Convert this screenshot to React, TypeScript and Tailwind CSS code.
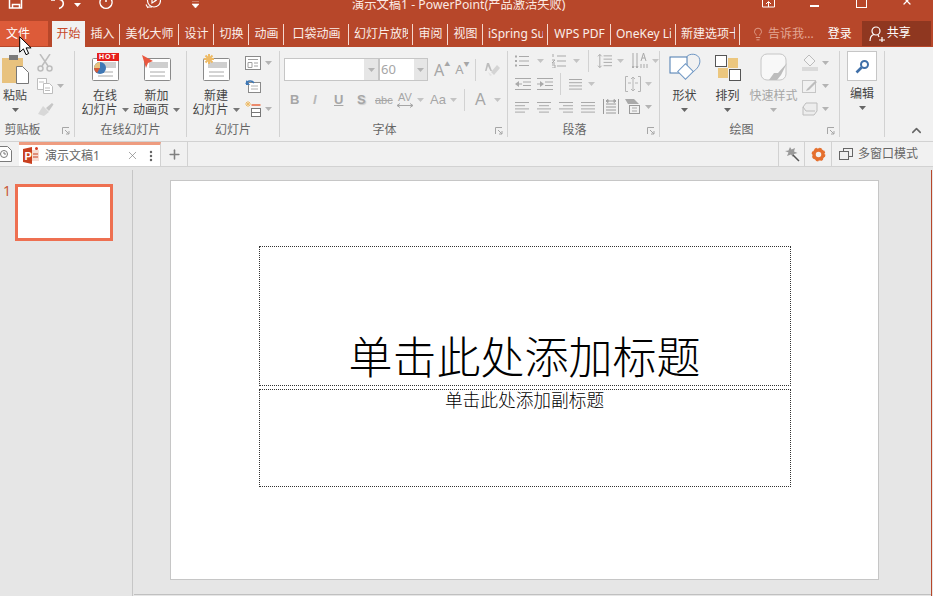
import type { ReactNode } from "react";
import { X, Plus, MoreVertical, Lightbulb, ChevronUp } from "lucide-react";

const tabs = [
  { label: "插入", w: "w-[35px]" },
  { label: "美化大师", w: "w-[59px]" },
  { label: "设计", w: "w-[35px]" },
  { label: "切换", w: "w-[35px]" },
  { label: "动画", w: "w-[35px]" },
  { label: "口袋动画", w: "w-[65px]" },
  { label: "幻灯片放映", w: "w-[64px]" },
  { label: "审阅", w: "w-[35px]" },
  { label: "视图", w: "w-[35px]" },
  { label: "iSpring Suite", w: "w-[65px]" },
  { label: "WPS PDF", w: "w-[63px]" },
  { label: "OneKey Lite", w: "w-[65px]" },
  { label: "新建选项卡", w: "w-[64px]" },
];

function Caret({ className = "text-[#b4b4b4]" }: { className?: string }) {
  return (
    <svg width="7" height="4" viewBox="0 0 7 4" className={`shrink-0 ${className}`}>
      <path d="M0 0h7L3.5 4z" fill="currentColor" />
    </svg>
  );
}

function Launcher() {
  return (
    <svg width="8" height="8" viewBox="0 0 8 8" className="absolute right-[4px] bottom-[2px]" fill="none" stroke="#a6a6a6">
      <path d="M.5 7V.5H7M3 3l4 4M7 4v3H4" />
    </svg>
  );
}

function Group({ label, w, labelClass = "", children }: { label?: string; w: string; labelClass?: string; children: ReactNode }) {
  return (
    <div className={`relative flex h-[86px] shrink-0 flex-col border-r border-[#d2d2d2] ${w}`}>
      <div className="flex h-[70px] min-h-0">{children}</div>
      {label && <div className={`mt-[3px] text-center text-[12px] leading-[14px] text-[#666] ${labelClass}`}>{label}</div>}
    </div>
  );
}

function BigButton({ w, icon, lines, caret, muted }: { w: string; icon: ReactNode; lines: ReactNode; caret?: boolean; muted?: boolean }) {
  return (
    <div className={`flex shrink-0 flex-col items-center ${w} ${muted ? "text-[#a6a6a6]" : "text-[#444]"}`}>
      <div className="flex h-[33px] items-center justify-center">{icon}</div>
      <div className="mt-[5px] text-center text-[12px] leading-[14px] whitespace-nowrap">{lines}</div>
      {caret && <Caret className={muted ? "mt-[5px] text-[#b4b4b4]" : "mt-[5px] text-[#666]"} />}
    </div>
  );
}

function SmallIcon({ children, caret = true }: { children: ReactNode; caret?: boolean }) {
  return (
    <div className="flex h-[23px] items-center gap-[4px]">
      {children}
      {caret && <Caret />}
    </div>
  );
}

function Lines({ rows, w = 14 }: { rows: [number, number][]; w?: number }) {
  return (
    <svg width={w} height="12" viewBox={`0 0 ${w} 12`} stroke="#a9a9a9" fill="none">
      {rows.map(([a, b], i) => (
        <path key={i} d={`M${a} ${1.5 + i * 3.2}H${b}`} />
      ))}
    </svg>
  );
}

function SlideIcon({ children }: { children?: ReactNode }) {
  return (
    <svg width="30" height="28" viewBox="0 0 30 28" fill="none">
      <rect x="2.5" y="4.5" width="26" height="22" rx="1" fill="#fff" stroke="#8a8a8a" />
      <rect x="7" y="8" width="19" height="6" fill="#cfcfcf" />
      <path d="M8 18h15M8 22h15" stroke="#a8a8a8" />
      {children}
    </svg>
  );
}

function TwoLines({ top, bottom }: { top: string; bottom: string }) {
  return (
    <>
      <div className="h-[14px]">{top}</div>
      <div className="flex h-[14px] items-center justify-center gap-[4px]">
        {bottom}
        <Caret className="text-[#777]" />
      </div>
    </>
  );
}

export default function App() {
  return (
    <div
      className="relative flex h-[596px] w-[933px] flex-col overflow-hidden bg-[#e6e6e6] text-[12px]"
      style={{ fontFamily: '"Noto Sans", "Noto Sans CJK SC", sans-serif' }}
    >
      {/* title bar, icons are cut off by the top of the shot */}
      <div className="relative flex h-[21px] shrink-0 items-start overflow-hidden bg-[#b7472a] text-white">
        <div className="flex h-[10px] items-end">
          <svg width="16" height="10" viewBox="0 0 16 10" className="ml-[8px]" fill="none" stroke="#fff" strokeWidth="1.5">
            <path d="M1.5-4v12h12V-4M4.500 8V4.500h7V8" />
          </svg>
          <svg width="18" height="10" viewBox="0 0 18 10" className="ml-[26px]" fill="none" stroke="#fff" strokeWidth="1.6">
            <path d="M3 0c3-2 9-1 10 2s-1 6-4 6.500M1 0h4M3 0l2-3" />
          </svg>
          <svg width="7" height="4" viewBox="0 0 7 4" className="mb-[3px] ml-[6px]"><path d="M0 0h7L3.500 4z" fill="#fff" /></svg>
          <svg width="14" height="10" viewBox="0 0 14 10" className="ml-[18px]" fill="none" stroke="#fff" strokeWidth="1.500">
            <path d="M2-1a6 6 0 1 0 10 0M7-3v5" />
          </svg>
          <svg width="16" height="11" viewBox="0 0 16 11" className="ml-[32px]" fill="none" stroke="#fff" strokeWidth="1.200">
            <circle cx="9" cy="1.500" r="6.500" />
            <path d="M7-1l4 2.500L7 4zM1 5.500L3 9M3 8h4" />
          </svg>
          <svg width="7" height="8" viewBox="0 0 7 8" className="mb-[1px] ml-[31px]">
            <path d="M0 0h7M0 3h7L3.500 7z" fill="#fff" stroke="#fff" strokeWidth=".6" />
          </svg>
        </div>
        <div className="absolute left-[352px] top-[-4px] text-[12.250px] leading-[18px] whitespace-nowrap text-[#fbe9e3]">
          演示文稿1 - PowerPoint(产品激活失败)
        </div>
        <div className="ml-auto flex h-[8px] items-end pr-[20px]">
          <svg width="13" height="8" viewBox="0 0 13 8" className="mr-[35px]" fill="none" stroke="#fff">
            <path d="M.5-1v8h12v-8M6.500 7V2M4 4l2.500-2.500L9 4" />
          </svg>
          <div className="mb-[1px] mr-[37px] h-[2px] w-[9px] bg-white" />
          <div className="mr-[34px] h-[8px] w-[11px] border-x border-b border-white" />
          <X size={12} strokeWidth={2.5} className="-translate-y-[1px]" color="#fff" />
        </div>
      </div>

      {/* ribbon tabs */}
      <div className="flex h-[26px] shrink-0 items-stretch bg-[#b7472a] text-[12px] text-[#fbeee9]">
        <div className="flex h-[25px] w-[48px] items-center bg-[#dd5b39] pl-[6px] text-white">文件</div>
        <div className="ml-[4px] flex w-[33px] items-center justify-center bg-[#f1f1f1] text-[#c6492a]">开始</div>
        {tabs.map((t) => (
          <div key={t.label} className={`flex items-center ${t.w}`}>
            <span className="mr-[4px] ml-[5px] min-w-0 flex-1 overflow-hidden text-center whitespace-nowrap">{t.label}</span>
            <span className="h-[21px] w-px shrink-0 bg-[#f5d8cf]" />
          </div>
        ))}
        <div className="ml-[11px] flex items-center gap-[2px] text-[#e3a693]">
          <Lightbulb size={14} strokeWidth={1.5} />
          <span className="ml-[1px]">告诉我...</span>
        </div>
        <div className="ml-[14px] flex items-center text-white">登录</div>
        <div className="ml-[10px] flex h-[25px] w-[69px] items-center gap-[2px] bg-[#8f3720] pl-[7px] text-white">
          <svg width="16" height="16" viewBox="0 0 16 16" fill="none" stroke="#fff" strokeWidth="1.200">
            <circle cx="7" cy="5" r="4" />
            <path d="M1 15c0-4 2-6 4-6.500M9 9l1 2M10 14h6M13 11v6" />
          </svg>
          <span className="-mt-[2px]">共享</span>
        </div>
      </div>

      {/* ribbon */}
      <div className="flex h-[94px] shrink-0 bg-[#f1f1f1] pt-[4px]">
        <Group label="剪贴板" w="w-[75px]" labelClass="pr-[29px]">
          <BigButton
            w="w-[30px]"
            caret
            icon={
              <svg width="30" height="32" viewBox="0 0 30 32" className="mt-[2px]">
                <rect x="2" y="5" width="21" height="25" fill="#e8c27e" />
                <rect x="9" y="2" width="9" height="5" fill="#7a7a7a" />
                <path d="M16.500 13.500h6l6 6v11h-12z" fill="#fff" stroke="#777" />
              </svg>
            }
            lines="粘贴"
          />
          <div className="ml-[7px] flex flex-col pt-[1px]">
            <SmallIcon caret={false}>
              <svg width="16" height="18" viewBox="0 0 16 18" fill="none" stroke="#bdbdbd" strokeWidth="1.500">
                <path d="M3 0l8 12M13 0L5 12" />
                <circle cx="3.500" cy="14.500" r="2.500" />
                <circle cx="12.500" cy="14.500" r="2.500" />
              </svg>
            </SmallIcon>
            <SmallIcon>
              <svg width="16" height="16" viewBox="0 0 16 16" fill="#fff" stroke="#bdbdbd">
                <path d="M.5.500h9v11h-9z" />
                <path d="M6.500 5.500h6l3 3v7h-9z" />
                <path d="M2 4h5M8 10h5M8 12.500h5" />
              </svg>
            </SmallIcon>
            <SmallIcon caret={false}>
              <svg width="17" height="15" viewBox="0 0 17 15" className="mt-[1px]">
                <path d="M9 6l6-5 1.500 1.500L12 9z" fill="#c6c6c6" />
                <path d="M1 12l5-8 6 6-5 4z" fill="#d8d8d8" />
              </svg>
            </SmallIcon>
          </div>
          <Launcher />
        </Group>

        <Group label="在线幻灯片" w="w-[112px]">
          <BigButton
            w="ml-[2px] w-[56px]"
            icon={
              <div className="relative">
                <SlideIcon>
                  <circle cx="10" cy="14" r="6" fill="#3f78b5" />
                  <path d="M10 14V8a6 6 0 0 0-6 6z" fill="#e8c27e" />
                  <path d="M10 14H4a6 6 0 0 0 3 5z" fill="#d75b36" />
                </SlideIcon>
                <span className="absolute top-[-1px] left-[7px] bg-[#e6201c] px-[2px] text-[7px] leading-[8px] font-bold tracking-[1px] text-white" style={{ fontFamily: '"Liberation Sans", sans-serif' }}>
                  HOT
                </span>
              </div>
            }
            lines={<TwoLines top="在线" bottom="幻灯片" />}
          />
          <BigButton
            w="w-[47px]"
            icon={
              <SlideIcon>
                <path d="M0 1l11 6-5 2-2 5z" fill="#e9573f" />
              </SlideIcon>
            }
            lines={<TwoLines top="新加" bottom="动画页" />}
          />
        </Group>

        <Group label="幻灯片" w="w-[93px]">
          <BigButton
            w="w-[58px]"
            icon={
              <SlideIcon>
                <path d="M8 0v10M3 5h10M4.500 1.500l7 7M11.500 1.500l-7 7" stroke="#eebb66" strokeWidth="2" />
              </SlideIcon>
            }
            lines={<TwoLines top="新建" bottom="幻灯片" />}
          />
          <div className="flex flex-col">
            <SmallIcon>
              <svg width="16" height="14" viewBox="0 0 16 14" fill="#fff" stroke="#8a8a8a">
                <rect x=".5" y=".5" width="15" height="13" />
                <path d="M3 3.500h10M3 6.500h4v5H3zM9 7h4M9 10h4" stroke="#a0a0a0" />
              </svg>
            </SmallIcon>
            <SmallIcon caret={false}>
              <svg width="16" height="14" viewBox="0 0 16 14" fill="none">
                <rect x="3.500" y="3.500" width="12" height="10" fill="#fff" stroke="#8a8a8a" />
                <path d="M1 5a4.500 4.500 0 0 1 8-1" stroke="#3f78b5" strokeWidth="1.500" />
                <path d="M1 1v5h4" fill="#3f78b5" />
                <path d="M6 7h7M6 10h7" stroke="#b0b0b0" />
              </svg>
            </SmallIcon>
            <SmallIcon>
              <svg width="16" height="16" viewBox="0 0 16 16" fill="none">
                <path d="M3 0v6M0 3h6M1 1l4 4M5 1L1 5" stroke="#eebb66" />
                <path d="M6.500 4h9" stroke="#e9673f" strokeWidth="1.500" />
                <rect x="6.500" y="7.500" width="9" height="8" fill="#fff" stroke="#777" />
                <path d="M6.500 11.500h9" stroke="#777" />
              </svg>
            </SmallIcon>
          </div>
        </Group>

        <Group label="字体" w="w-[228px]" labelClass="pr-[18px]">
          <div className="flex flex-col pt-[7px] pl-[4px]">
            <div className="flex items-center">
              <div className="flex h-[23px] w-[95px] border border-[#c6c6c6] bg-white">
                <div className="flex-1" />
                <div className="flex w-[14px] items-center justify-center bg-[#e6e6e6]"><Caret /></div>
              </div>
              <div className="flex h-[23px] w-[49px] border border-[#c6c6c6] bg-white">
                <div className="flex-1 pl-[1px] text-[13px] leading-[21px] text-[#a6a6a6]">60</div>
                <div className="flex w-[13px] items-center justify-center bg-[#e6e6e6]"><Caret /></div>
              </div>
              <span className="ml-[6px] text-[16px] leading-none text-[#a6a6a6]">A</span>
              <span className="mb-[10px] text-[6px] text-[#a6a6a6]">▲</span>
              <span className="ml-[5px] text-[13px] leading-none text-[#a6a6a6]">A</span>
              <span className="mb-[10px] text-[6px] text-[#a6a6a6]">▼</span>
              <span className="ml-[5px] h-[22px] w-px bg-[#d2d2d2]" />
              <svg width="16" height="16" viewBox="0 0 16 16" className="ml-[8px]">
                <path d="M7 10l6-7 3 3-6 7z" fill="#d4d4d4" />
                <path d="M3 1h2l3 8H6.500L4 4 2.500 9H1z" fill="#bdbdbd" />
                <path d="M4 10l4 3-2 1z" fill="#e2e2e2" />
              </svg>
            </div>
            <div className="mt-[8px] flex h-[22px] items-center text-[#a6a6a6]" style={{ fontFamily: '"Liberation Sans", sans-serif' }}>
              <span className="ml-[6px] w-[23px] text-[13px] font-bold">B</span>
              <span className="w-[21px] text-[13px] font-bold text-[#b8b8b8] italic">I</span>
              <span className="w-[23px] text-[13px] font-bold underline">U</span>
              <span className="w-[18px] text-[13px] font-bold" style={{ textShadow: "1px 1px 1px #ccc" }}>S</span>
              <span className="w-[21px] text-[11px] line-through">abc</span>
              <span className="flex w-[18px] flex-col items-center text-[11px] leading-[11px]">
                AV
                <svg width="16" height="5" viewBox="0 0 16 5" fill="none" stroke="#a6a6a6"><path d="M0 2.500h16M3 .500l-3 2 3 2M13 .500l3 2-3 2" /></svg>
              </span>
              <Caret className="ml-[3px] text-[#c4c4c4]" />
              <span className="ml-[6px] w-[15px] text-[13px]">Aa</span>
              <Caret className="ml-[5px] text-[#c4c4c4]" />
              <span className="ml-[7px] h-[22px] w-px bg-[#d2d2d2]" />
              <span className="ml-[10px] w-[11px] text-[16px]">A</span>
              <Caret className="ml-[8px] text-[#c4c4c4]" />
            </div>
          </div>
          <Launcher />
        </Group>

        <Group label="段落" w="w-[152px]" labelClass="pr-[18px]">
          <div className="-mt-[2px] flex flex-col pl-[7px]">
            <div className="flex h-[23px] items-center">
              <svg width="14" height="12" viewBox="0 0 14 12" fill="none" stroke="#a9a9a9"><path d="M4 1.500h10M4 6h10M4 10.500h10" /><path d="M0 1.500h2M0 6h2M0 10.500h2" strokeWidth="2" /></svg>
              <Caret className="ml-[8px] text-[#c4c4c4]" />
              <svg width="14" height="14" viewBox="0 0 14 14" className="ml-[8px]" fill="none" stroke="#a9a9a9"><path d="M5 2h9M5 7h9M5 12h9M1 0v3M0 6h3L0 9h3M0 11h3v3H0" /></svg>
              <Caret className="ml-[7px] text-[#c4c4c4]" />
              <span className="ml-[8px] h-[22px] w-px bg-[#d2d2d2]" />
              <svg width="15" height="16" viewBox="0 0 16 16" className="ml-[8px]" fill="none" stroke="#a9a9a9"><path d="M7 2.500h9M7 6h9M7 9.500h9M7 13h9M3 1v14M1 3l2-2 2 2M1 13l2 2 2-2" /></svg>
              <Caret className="ml-[5px] text-[#c4c4c4]" />
              <svg width="16" height="18" viewBox="0 0 16 18" className="ml-[8px]" fill="none" stroke="#a9a9a9"><path d="M1 1v15M5 1v15M0 14l1 2 1-2M4 14l1 2 1-2M9 9l2.500-8L14 9M10 6h3M9 12v4M12 12v4M15 12v4" /></svg>
              <Caret className="ml-[4px] text-[#c4c4c4]" />
            </div>
            <div className="flex h-[23px] items-center">
              <svg width="16" height="12" viewBox="0 0 16 12" fill="none" stroke="#a9a9a9"><path d="M0 .500h16M8 4h8M8 7.500h8M0 11.500h16" /><path d="M0 6l4-3v6z" fill="#a9a9a9" stroke="none" /><path d="M3 6h4" /></svg>
              <svg width="16" height="12" viewBox="0 0 16 12" className="ml-[6px]" fill="none" stroke="#a9a9a9"><path d="M0 .500h16M8 4h8M8 7.500h8M0 11.500h16" /><path d="M7 6L3 3v6z" fill="#a9a9a9" stroke="none" /><path d="M0 6h4" /></svg>
              <span className="ml-[7px] h-[22px] w-px bg-[#d2d2d2]" />
              <span className="ml-[8px]"><Lines w={13} rows={[[0, 13], [0, 13], [0, 13], [0, 13]]} /></span>
              <Caret className="ml-[6px] text-[#c4c4c4]" />
              <svg width="16" height="16" viewBox="0 0 16 16" className="ml-[30px]" fill="none" stroke="#b5b5b5"><path d="M3 .500H.500v15H3M13 .500h2.500v15H13M8 1v14M6 3l2-2 2 2M6 13l2 2 2-2M3 7h3M10 7h3" /></svg>
              <Caret className="ml-[4px] text-[#c4c4c4]" />
            </div>
            <div className="flex h-[23px] items-center gap-[8px]">
              <Lines rows={[[0, 14], [0, 10], [0, 14], [0, 10]]} />
              <Lines rows={[[0, 14], [2, 12], [0, 14], [2, 12]]} />
              <Lines rows={[[0, 14], [4, 14], [0, 14], [4, 14]]} />
              <Lines rows={[[0, 14], [0, 14], [0, 14], [0, 14]]} />
              <svg width="16" height="15" viewBox="0 0 16 15" fill="none" stroke="#9a9a9a"><path d="M.500 0v15M15.500 0v15M3 5h10M3 8h10M3 11h10M3 14h10M4 2h8M3 2l2-1.500v3zM13 2l-2-1.500v3z" /></svg>
              <span className="-ml-[2px] flex items-center gap-[5px]">
                <svg width="15" height="15" viewBox="0 0 15 15" fill="none"><path d="M0 0h9l5 5H3z" fill="#a9a9a9" /><rect x="4.500" y="6.500" width="10" height="8" fill="#f1f1f1" stroke="#9a9a9a" /><path d="M7 9h5M7 12h5" stroke="#a9a9a9" /></svg>
                <Caret />
              </span>
            </div>
          </div>
          <Launcher />
        </Group>

        <Group label="绘图" w="w-[180px]" labelClass="pr-[16px]">
          <BigButton
            w="w-[49px]"
            caret
            icon={
              <svg width="32" height="32" viewBox="0 0 32 32" fill="none" stroke="#4a7ab0">
                <path d="M17 6.500c1-5 10-6 13-1 3 6-2 12-7 15" stroke="#6f97c4" />
                <rect x="1" y="5" width="17" height="16" fill="#fff" />
                <rect x="11" y="14" width="11" height="11" transform="rotate(45 16.500 19.500)" fill="#fff" stroke="#6f97c4" />
              </svg>
            }
            lines="形状"
          />
          <BigButton
            w="w-[37px]"
            caret
            icon={
              <svg width="28" height="28" viewBox="0 0 28 28">
                <rect x="1.500" y="1.500" width="11" height="11" fill="#fff" stroke="#555" />
                <rect x="14" y="4" width="10" height="10" fill="#ecc77f" />
                <rect x="4" y="14" width="10" height="10" fill="#ecc77f" />
                <rect x="15.500" y="15.500" width="11" height="11" fill="#fff" stroke="#555" />
              </svg>
            }
            lines="排列"
          />
          <BigButton
            w="w-[55px]"
            caret
            muted
            icon={
              <svg width="28" height="30" viewBox="0 0 28 30" fill="none">
                <rect x="1" y="1" width="25" height="26" rx="6" fill="#f8f8f8" stroke="#c6c6c6" />
                <path d="M27 10l-9 10-4 0-5 7h8l4-5z" fill="#bdbdbd" />
              </svg>
            }
            lines="快速样式"
          />
          <div className="ml-[1px] flex flex-col">
            <SmallIcon>
              <svg width="16" height="17" viewBox="0 0 16 17">
                <path d="M7 1l6 6-5 5-6-6z" fill="#f4f4f4" stroke="#bcbcbc" />
                <rect y="13" width="16" height="4" fill="#dadada" />
              </svg>
            </SmallIcon>
            <SmallIcon>
              <svg width="16" height="14" viewBox="0 0 16 14" fill="none">
                <rect x=".500" y="1.500" width="13" height="12" stroke="#c6c6c6" />
                <path d="M5 10l8-8 2 1-8 8-3 1z" fill="#bdbdbd" />
              </svg>
            </SmallIcon>
            <SmallIcon>
              <svg width="16" height="14" viewBox="0 0 16 14">
                <path d="M4 1h11v8l-3 4H1V5z" fill="#ededed" stroke="#bdbdbd" />
                <path d="M1 5l3 4h9" fill="none" stroke="#bdbdbd" />
              </svg>
            </SmallIcon>
          </div>
          <Launcher />
        </Group>

        <Group w="w-[45px]">
          <div className="flex w-full flex-col items-center text-[#444]">
            <div className="flex h-[30px] w-[30px] items-center justify-center border border-[#c6c6c6] bg-white">
              <svg width="15" height="15" viewBox="0 0 15 15" fill="none" stroke="#3f6fa8">
                <circle cx="9.500" cy="5.500" r="3.500" strokeWidth="2" />
                <path d="M6.500 8.500L1.500 13.500" strokeWidth="2.600" />
              </svg>
            </div>
            <div className="mt-[6px] leading-[14px]">编辑</div>
            <Caret className="mt-[5px] text-[#666]" />
          </div>
        </Group>

        <div className="relative flex-1">
          <ChevronUp size={15} strokeWidth={2.500} color="#666" className="absolute right-[9px] bottom-[3px]" />
        </div>
      </div>

      {/* document tab bar */}
      <div className="flex h-[26px] shrink-0 items-stretch border-y border-[#d2d2d2] bg-[#f1f1f1] text-[#666]">
        <div className="flex w-[19px] items-center overflow-hidden">
          <svg width="14" height="16" viewBox="0 0 14 16" className="-ml-[2px]" fill="#fff" stroke="#7a7a7a">
            <path d="M.500.500h9l4 4v11H.500z" />
            <circle cx="6" cy="8" r="3.500" />
            <path d="M6 6v2h2" />
          </svg>
        </div>
        <div className="flex w-[142px] items-center border-t-[3px] border-r border-[#ee9c80] border-r-[#d2d2d2] bg-white pr-[2px] pl-[4px]">
          <svg width="16" height="17" viewBox="0 0 16 17">
            <path d="M0 2l9-2v17l-9-2z" fill="#c9401f" />
            <rect x="9" y="3" width="7" height="11" fill="#f6dcd2" />
            <path d="M10 7h5M10 10h5" stroke="#c9401f" />
            <circle cx="13.500" cy="1.500" r="1.500" fill="#d63b1f" />
            <text x="1.500" y="13" fontSize="11" fontWeight="700" fill="#fff" fontFamily="Liberation Sans">P</text>
          </svg>
          <span className="ml-[6px] text-[12px]">演示文稿1</span>
          <X size={13} strokeWidth={1.200} className="ml-auto" color="#777" />
          <MoreVertical size={14} strokeWidth={2.200} color="#666" className="ml-[5px]" />
        </div>
        <div className="flex w-[27px] items-center justify-center border-r border-[#d2d2d2]">
          <Plus size={15} strokeWidth={2.500} color="#808080" />
        </div>
        <div className="flex-1" />
        <div className="flex w-[27px] items-center justify-center border-x border-[#d2d2d2]">
          <svg width="16" height="16" viewBox="0 0 16 16">
            <path d="M6 1l1.500 2.500L11 2l-1 3.500 3.500 1.500-3.500 1L9 11 7 8.500 3 10l1.500-3.500L1 5l3.500-.5z" fill="#9a9a9a" />
            <path d="M9 9l6 6" stroke="#555" strokeWidth="1.500" />
          </svg>
        </div>
        <div className="flex w-[27px] items-center justify-center border-r border-[#d2d2d2]">
          <svg width="15" height="15" viewBox="0 0 15 15" fill="none">
            <circle cx="7.500" cy="7.500" r="4.500" stroke="#e5702f" strokeWidth="3.500" />
            <circle cx="7.500" cy="7.500" r="6" stroke="#e5702f" strokeWidth="1.800" strokeDasharray="2.400 2.300" />
          </svg>
        </div>
        <div className="flex w-[101px] shrink-0 items-center pl-[7px] text-[12px]">
          <svg width="14" height="12" viewBox="0 0 14 12" fill="#f1f1f1" stroke="#666">
            <rect x="4.500" y=".5" width="9" height="8" />
            <rect x=".5" y="3.500" width="9" height="8" />
          </svg>
          <span className="ml-[5px]">多窗口模式</span>
        </div>
      </div>

      {/* workspace */}
      <div className="flex min-h-0 flex-1 pt-[3px]">
        <div className="flex w-[133px] shrink-0 border-r border-[#c6c6c6] pt-[14px]">
          <span className="-mt-[1px] ml-[3px] w-[9px] text-[14px] leading-[16px] text-[#c9583a]">1</span>
          <div className="ml-[3px] h-[57px] w-[98px] border-[3px] border-[#ee7051] bg-white" />
        </div>
        <div className="flex-1 pt-[10px] pl-[37px]">
          <div className="flex h-[400px] w-[709px] flex-col items-center border border-[#c6c6c6] bg-white pt-[65px]">
            <div className="flex h-[140px] w-[532px] items-end justify-center border border-dotted border-[#333] pb-[1px] text-[44px] leading-[57px] text-black" style={{ fontFamily: '"Noto Sans CJK SC", sans-serif', fontWeight: 200 }}>
              单击此处添加标题
            </div>
            <div className="mt-[3px] h-[98px] w-[532px] border border-dotted border-[#333] text-center text-[17.700px] leading-[18px] text-black" style={{ fontFamily: '"Noto Sans CJK SC", sans-serif', fontWeight: 300 }}>
              单击此处添加副标题
            </div>
          </div>
        </div>
        <div className="w-px bg-[#b7472a]" />
        <div className="w-px bg-[#e6e6e6]" />
      </div>
      <div className="absolute right-[2px] bottom-[1px] h-px w-[797px] bg-[#c0c0c0]" />

      {/* mouse pointer over the file tab */}
      <svg width="14" height="20" viewBox="0 0 14 20" className="absolute top-[36px] left-[19px]">
        <path d="M.7.7v15.500l3.700-3.300 2.600 5.800 2.700-1.200-2.600-5.600h5z" fill="#fff" stroke="#000" />
      </svg>
    </div>
  );
}
